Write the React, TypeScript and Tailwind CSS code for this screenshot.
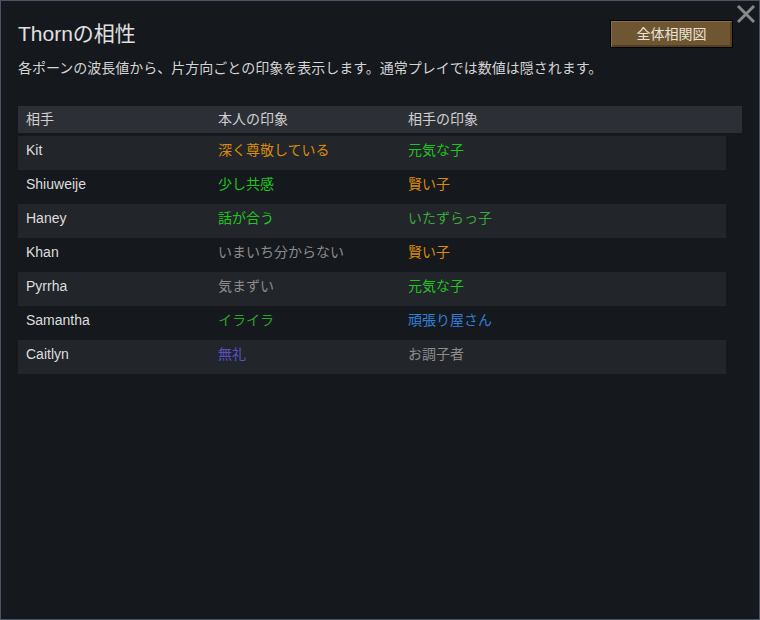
const rows = [
  { name: "Kit", mine: "深く尊敬している", mineColor: "text-[#d98c0b]", theirs: "元気な子", theirsColor: "text-[#1fc41f]" },
  { name: "Shiuweije", mine: "少し共感", mineColor: "text-[#1fc41f]", theirs: "賢い子", theirsColor: "text-[#d98c0b]" },
  { name: "Haney", mine: "話が合う", mineColor: "text-[#1fc41f]", theirs: "いたずらっ子", theirsColor: "text-[#3aa83a]" },
  { name: "Khan", mine: "いまいち分からない", mineColor: "text-[#8c8c8c]", theirs: "賢い子", theirsColor: "text-[#d98c0b]" },
  { name: "Pyrrha", mine: "気まずい", mineColor: "text-[#8c8c8c]", theirs: "元気な子", theirsColor: "text-[#1fc41f]" },
  { name: "Samantha", mine: "イライラ", mineColor: "text-[#2aa52a]", theirs: "頑張り屋さん", theirsColor: "text-[#2f80d6]" },
  { name: "Caitlyn", mine: "無礼", mineColor: "text-[#5a4fc6]", theirs: "お調子者", theirsColor: "text-[#8c8c8c]" },
];

export default function App() {
  return (
    <div
      className="relative h-[620px] w-[760px] border border-[#4a5464] bg-[#15181d] text-[#dcdcdc]"
      style={{ fontFamily: '"Liberation Sans", "Noto Sans CJK JP", sans-serif' }}
    >
      <button className="absolute right-[2px] top-[2px] flex h-[22px] w-[22px] items-center justify-center text-[#85888c]">
        <svg width="20" height="20" viewBox="0 0 20 20" fill="none" stroke="currentColor" strokeWidth="3">
          <path d="M2 2 L18 18 M18 2 L2 18" />
        </svg>
      </button>

      <div className="flex flex-col px-[17px] pt-[19px]">
        <div className="flex items-center justify-between pr-[9px]">
          <h1 className="text-[21px] leading-[28px] text-[#e0e0e0]">Thornの相性</h1>
          <button className="h-[28px] w-[123px] border border-black bg-[#6e5632] text-[14px] text-[#e8e2d4] shadow-[inset_1px_1px_0_#8a6e44,inset_-2px_-2px_0_#54401f]">
            全体相関図
          </button>
        </div>
        <p className="mt-[10px] text-[14px] leading-[20px] text-[#d4d4d4]">
          各ポーンの波長値から、片方向ごとの印象を表示します。通常プレイでは数値は隠されます。
        </p>

        <div className="mt-[28px] flex flex-col text-[14px]">
          <div className="flex h-[30px] w-[724px] items-center border-b-[3px] border-[#15181d] bg-[#2c2f35] text-[#d0d0d0]">
            <span className="w-[190px] pl-[8px]">相手</span>
            <span className="w-[190px] pl-[10px]">本人の印象</span>
            <span className="pl-[10px]">相手の印象</span>
          </div>
          {rows.map((r, i) => (
            <div
              key={r.name}
              className={`flex h-[34px] w-[708px] items-center pb-[6px] ${i % 2 === 0 ? "bg-[#22252a]" : "bg-[#15181d]"}`}
            >
              <span className="w-[190px] pl-[8px] text-[#dedede]">{r.name}</span>
              <span className={`w-[190px] pl-[10px] ${r.mineColor}`}>{r.mine}</span>
              <span className={`pl-[10px] ${r.theirsColor}`}>{r.theirs}</span>
            </div>
          ))}
        </div>
      </div>
    </div>
  );
}
